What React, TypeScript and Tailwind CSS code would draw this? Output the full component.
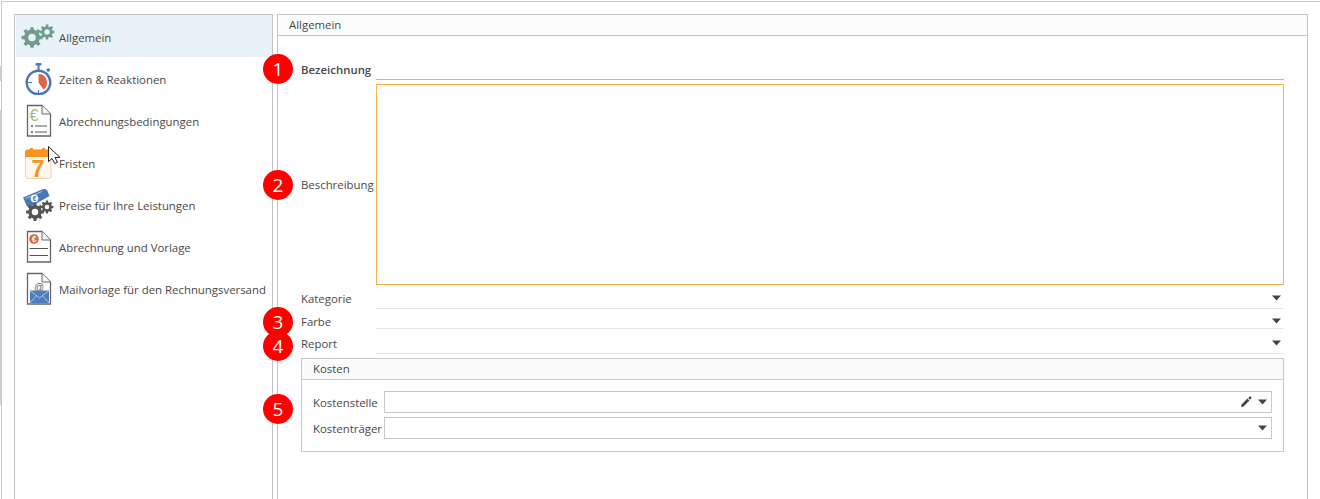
import React from 'react';

const gearPath = (cx: number, cy: number, r: number, teeth: number) => {
  // outer ring with square-ish teeth, hole is drawn separately
  const pts: string[] = [];
  const step = (Math.PI * 2) / teeth;
  for (let i = 0; i < teeth; i++) {
    const a = i * step;
    const inner = r * 0.76;
    const p = (rad: number, ang: number) =>
      `${(cx + rad * Math.cos(ang)).toFixed(2)} ${(cy + rad * Math.sin(ang)).toFixed(2)}`;
    pts.push(p(inner, a - step * 0.3), p(r, a - step * 0.2), p(r, a + step * 0.2), p(inner, a + step * 0.3));
  }
  return `M${pts.join('L')}Z`;
};

function Gear({ cx, cy, r, fill, hole = '#fff', teeth = 8 }: { cx: number; cy: number; r: number; fill: string; hole?: string; teeth?: number }) {
  return (
    <>
      <path d={gearPath(cx, cy, r, teeth)} fill={fill} />
      <circle cx={cx} cy={cy} r={r * 0.36} fill={hole} />
    </>
  );
}

function GearsIcon() {
  return (
    <svg width="34" height="34" viewBox="0 0 34 34">
      <Gear cx={11} cy={18.5} r={10.5} fill="#6f9d8b" hole="#e9f1f9" />
      <Gear cx={26} cy={13} r={7.5} fill="#6f9d8b" hole="#e9f1f9" />
    </svg>
  );
}

function StopwatchIcon() {
  return (
    <svg width="34" height="34" viewBox="0 0 34 34">
      <rect x="14.5" y="2" width="6" height="2.5" rx="1" fill="#4a78b5" />
      <rect x="16.5" y="4" width="2" height="5" fill="#4a78b5" />
      <circle cx="27.3" cy="9" r="1.8" fill="#4a78b5" />
      <circle cx="17.5" cy="21.5" r="11.8" fill="#fff" stroke="#4a78b5" strokeWidth="2.4" />
      <path d="M17.5 13 A8.5 8.5 0 0 1 22.5 28.4 L17.5 21.5 Z" fill="#dc6644" />
      <path d="M7 21.5 H11 M17.5 29 V32" stroke="#4a78b5" strokeWidth="1.2" />
    </svg>
  );
}

function DocShape({ children }: { children?: React.ReactNode }) {
  return (
    <svg width="34" height="34" viewBox="0 0 34 34">
      <path d="M6.5 2.5 H21 L29.5 11 V33 H6.5 Z" fill="#fff" stroke="#666" strokeWidth="1.3" />
      <path d="M21 2.5 V11 H29.5" fill="#f4f4f4" stroke="#666" strokeWidth="1" />
      {children}
    </svg>
  );
}

function TermsIcon() {
  return (
    <DocShape>
      <text x="8.5" y="18" fontSize="16" fill="#a8b87a" fontFamily="Liberation Sans, sans-serif">€</text>
      <circle cx="11" cy="23" r="1" fill="#555" />
      <circle cx="11" cy="29" r="1" fill="#555" />
      <path d="M14 23H26M14 29H26" stroke="#555" strokeWidth="1" />
    </DocShape>
  );
}

function CalendarIcon() {
  return (
    <svg width="34" height="40" viewBox="0 0 34 40">
      <rect x="4.5" y="5" width="25.5" height="28.5" rx="2.5" fill="#fff7ee" stroke="#f9d3a6" />
      <path d="M4 12 V6.5 Q4 4.5 6.5 4.5 H9 V3 H12 V4.5 H21 V3 H24 V4.5 H27.5 Q30.5 4.5 30.5 6.5 V12 Z" fill="#f7931e" />
      <text x="17" y="32" textAnchor="middle" fontSize="23" fontWeight="700" fill="#f7931e" fontFamily="Liberation Sans, sans-serif">7</text>
    </svg>
  );
}

function PriceIcon() {
  return (
    <svg width="34" height="34" viewBox="0 0 34 34">
      <path d="M2 10.5 L21 2.5 Q25 1.2 26.5 4 L28.5 9 L9 20 Q6.5 20.5 5.5 18.5 Z" fill="#4a78b5" />
      <path d="M4.5 11.5 L21 4.5" stroke="#cfdcee" strokeWidth="0.8" />
      <circle cx="13.5" cy="11.5" r="3.8" fill="#fff" />
      <text x="13.5" y="14.3" textAnchor="middle" fontSize="7.5" fontWeight="700" fill="#4a78b5" fontFamily="Liberation Sans, sans-serif">€</text>
      <Gear cx={14} cy={25} r={9} fill="#555" />
      <Gear cx={26} cy={20} r={6.5} fill="#555" />
    </svg>
  );
}

function InvoiceIcon() {
  return (
    <DocShape>
      <circle cx="13" cy="10" r="4.8" fill="#dc6644" />
      <text x="13" y="13" textAnchor="middle" fontSize="8.5" fontWeight="700" fill="#fff" fontFamily="Liberation Sans, sans-serif">€</text>
      <path d="M8.5 19.5H27M8.5 26.5H27" stroke="#555" strokeWidth="1" />
    </DocShape>
  );
}

function MailIcon() {
  return (
    <DocShape>
      <text x="18" y="19.5" textAnchor="middle" fontSize="10" fill="#666" fontFamily="Liberation Sans, sans-serif">@</text>
      <rect x="9" y="19.5" width="19" height="12.5" fill="#4f7fba" />
      <path d="M9 19.5 L18.5 27 L28 19.5 M9 32 L15.5 24.5 M28 32 L21.5 24.5" fill="none" stroke="#c3d5ea" strokeWidth="0.8" />
    </DocShape>
  );
}

const navItems = [
  { label: 'Allgemein', icon: <GearsIcon />, active: true },
  { label: 'Zeiten & Reaktionen', icon: <StopwatchIcon /> },
  { label: 'Abrechnungsbedingungen', icon: <TermsIcon /> },
  { label: 'Fristen', icon: <CalendarIcon /> },
  { label: 'Preise für Ihre Leistungen', icon: <PriceIcon /> },
  { label: 'Abrechnung und Vorlage', icon: <InvoiceIcon /> },
  { label: 'Mailvorlage für den Rechnungsversand', icon: <MailIcon /> },
];

function Caret() {
  return (
    <svg width="9" height="6" viewBox="0 0 9 6" className="shrink-0">
      <path d="M0 0.5H9L4.5 5.5Z" fill="#444" />
    </svg>
  );
}

function SelectRow({ label, height, offset }: { label: string; height: string; offset: string }) {
  return (
    <div className={`flex ${height}`}>
      <div className={`w-[75px] shrink-0 self-center ${offset}`}>{label}</div>
      <div className={`flex-1 flex items-center justify-end pr-[3px] border-b border-[#e6e6e6] ${offset}`}>
        <Caret />
      </div>
    </div>
  );
}

function Badge({ n, className }: { n: number; className: string }) {
  return (
    <div className={`absolute w-[30px] h-[30px] rounded-full bg-[#fe0000] text-white flex items-center justify-center text-[19px] ${className}`}>
      {n}
    </div>
  );
}

export default function App() {
  return (
    <div className="relative h-[499px] w-[1320px] overflow-hidden bg-white pt-[1px] pl-[1px] text-[11.4px] text-[#484848] font-['Open_Sans',sans-serif]">
      <div className="h-full border-t border-l border-[#c8c8c8] flex pl-[12px] pt-[12px] pr-[12px] gap-[4px]">
        {/* Sidebar */}
        <div className="w-[259px] shrink-0 h-[520px] border border-[#c4c4c4] pl-[1px]">
          {navItems.map((item) => (
            <div
              key={item.label}
              className={`relative h-[42px] flex items-center pl-[43px] pt-[3px] whitespace-nowrap ${item.active ? 'bg-[#e9f1f9]' : ''}`}
            >
              <div className="absolute left-[5px] top-[4px]">{item.icon}</div>
              {item.label}
            </div>
          ))}
        </div>

        {/* Main panel */}
        <div className="flex-1 h-[520px] border border-[#c4c4c4]">
          <div className="h-[21px] pl-[11px] flex items-center bg-[#fcfcfc] border-b border-[#c4c4c4]">Allgemein</div>
          <div className="pl-[23px] pr-[23px] pt-[24px]">
            <div className="flex h-[20px]">
              <div className="w-[75px] shrink-0 self-center font-semibold whitespace-nowrap">Bezeichnung</div>
              <div className="flex-1 border-b border-[#f4b342]" />
            </div>
            <div className="flex h-[205px] pt-[4px]">
              <div className="w-[75px] shrink-0 self-center">Beschreibung</div>
              <div className="flex-1 border border-[#f4b342]" />
            </div>
            <SelectRow label="Kategorie" height="h-[24px]" offset="pt-[3px]" />
            <SelectRow label="Farbe" height="h-[20px]" offset="pt-[5px]" />
            <SelectRow label="Report" height="h-[25px]" offset="pt-[4px]" />

            {/* Kosten */}
            <div className="mt-[4px] h-[94px] border border-[#c8c8c8]">
              <div className="h-[21px] pl-[11px] flex items-center bg-[#fafafa] border-b border-[#c8c8c8]">Kosten</div>
              <div className="pl-[11px] pr-[11px] pt-[11px] flex flex-col gap-[4px]">
                <div className="flex">
                  <div className="w-[71px] shrink-0 self-center pt-[2px]">Kostenstelle</div>
                  <div className="flex-1 h-[22px] border border-[#c8c8c8] flex items-center justify-end gap-[6px] pr-[4px]">
                    <svg width="12" height="12" viewBox="0 0 12 12">
                      <path d="M1 11 L1.6 8.4 L7.4 2.6 L9.4 4.6 L3.6 10.4 Z" fill="#444" />
                      <circle cx="10" cy="2" r="1.4" fill="#444" />
                    </svg>
                    <Caret />
                  </div>
                </div>
                <div className="flex">
                  <div className="w-[71px] shrink-0 self-center pt-[2px] whitespace-nowrap">Kostenträger</div>
                  <div className="flex-1 h-[22px] border border-[#c8c8c8] flex items-center justify-end pr-[4px]">
                    <Caret />
                  </div>
                </div>
              </div>
            </div>
          </div>
        </div>
      </div>

      {/* Window edge showing behind */}
      <div className="absolute left-0 top-[66px] w-[1px] h-[15px] bg-[#d0d0d0]" />
      <div className="absolute left-0 top-[110px] w-[1px] h-[295px] bg-[#d0d0d0]" />

      {/* Annotations on top of the screenshot */}
      <Badge n={1} className="left-[263px] top-[54px]" />
      <Badge n={2} className="left-[263px] top-[170px]" />
      <Badge n={3} className="left-[263px] top-[307px]" />
      <Badge n={4} className="left-[263px] top-[331px]" />
      <Badge n={5} className="left-[263px] top-[394px]" />
      <svg width="14" height="20" viewBox="0 0 14 20" className="absolute left-[48px] top-[146px]">
        <path d="M0.5 0.5 L0.5 15.5 L4 12.5 L6.8 17.5 L9.5 16.2 L7 11.5 L12 11.5 Z" fill="#fff" stroke="#222" strokeWidth="1" />
      </svg>
    </div>
  );
}
